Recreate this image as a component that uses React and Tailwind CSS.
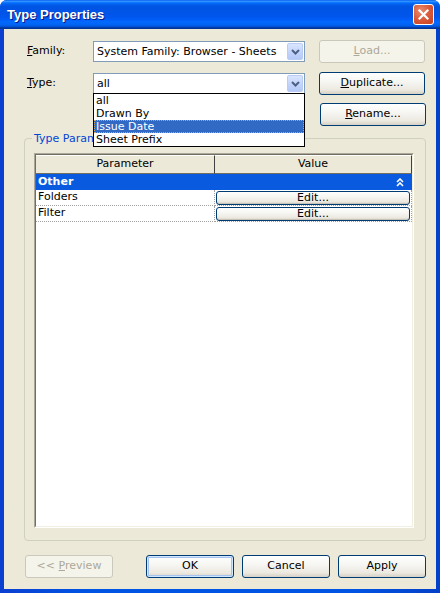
import React from "react";

const xpButton =
  "flex items-center justify-center rounded-[3px] border border-[#003c74] bg-[linear-gradient(to_bottom,#ffffff_0%,#f6f6f3_40%,#ece9e0_80%,#d6d0c5_100%)] text-black";
const xpButtonDisabled =
  "flex items-center justify-center rounded-[3px] border border-[#cac8bb] bg-[#f5f4ea] text-[#aca899]";

function Chevron() {
  return (
    <svg width="9" height="6" viewBox="0 0 9 6">
      <path d="M1 1 L4.5 4.5 L8 1" fill="none" stroke="#4d6185" strokeWidth="2" />
    </svg>
  );
}

function Combo({ value, children }) {
  return (
    <div className="relative h-[21px] w-[212px] border border-[#7f9db9] bg-white flex items-center">
      <span className="flex-1 pl-[3px] leading-none">{value}</span>
      <div className="mr-[1px] flex h-[17px] w-[16px] items-center justify-center rounded-[2px] border border-[#b9ccf6] bg-[linear-gradient(to_bottom,#d9e5fd_0%,#c1d3fb_60%,#b4c9f7_100%)]">
        <Chevron />
      </div>
      {children}
    </div>
  );
}

function CollapseIcon() {
  return (
    <svg width="8" height="9" viewBox="0 0 8 9">
      <path d="M1 4 L4 1 L7 4 M1 8 L4 5 L7 8" fill="none" stroke="white" strokeWidth="1.6" />
    </svg>
  );
}

export default function App() {
  return (
    <div className="h-[593px] w-[440px] bg-white font-['DejaVu_Sans',sans-serif] text-[11px] text-black">
      <div className="flex h-full w-full flex-col rounded-t-[7px] bg-[linear-gradient(to_right,#0a3fd0,#0054e3_20%,#0054e3_80%,#0440c8)]">
        {/* title bar */}
        <div className="flex h-[29px] shrink-0 items-center justify-between rounded-t-[7px] bg-[linear-gradient(to_bottom,#0058ee_0%,#3593ff_4%,#288eff_6%,#127dff_8%,#036ffc_10%,#0262ee_14%,#0057e5_20%,#0054e3_24%,#0055eb_56%,#005bf5_66%,#026afe_76%,#0062ef_86%,#0052d6_92%,#0040ab_94%,#003092_100%)] pl-[7px] pr-[6px]">
          <span className="font-['Liberation_Sans',sans-serif] text-[13px] font-bold text-white [text-shadow:1px_1px_0_#0a1883]">
            Type Properties
          </span>
          <div className="flex h-[21px] w-[21px] items-center justify-center rounded-[3px] border border-white bg-[radial-gradient(circle_at_35%_30%,#e88c70_0%,#d9593a_50%,#c4401e_100%)]">
            <svg width="11" height="11" viewBox="0 0 11 11">
              <path d="M1.5 1.5 L9.5 9.5 M9.5 1.5 L1.5 9.5" stroke="white" strokeWidth="2.2" strokeLinecap="square" />
            </svg>
          </div>
        </div>

        {/* dialog body */}
        <div className="mx-[4px] mb-[4px] flex flex-1 flex-col bg-[#ece9d8] pl-[20px] pr-[10px] pt-[11px] pb-[11px]">
          <div className="flex h-[23px] items-center">
            <span className="w-[69px] pl-[3px]">
              <span className="underline">F</span>amily:
            </span>
            <Combo value="System Family: Browser - Sheets" />
            <div className={xpButtonDisabled + " ml-[14px] h-[23px] w-[106px]"}>
              <span>
                <span className="underline">L</span>oad...
              </span>
            </div>
          </div>

          <div className="relative z-10 mt-[9px] flex h-[23px] items-center">
            <span className="w-[69px] pl-[3px]">
              <span className="underline">T</span>ype:
            </span>
            <Combo value="all">
              <div className="absolute left-[-1px] top-full w-[212px] border border-black bg-white">
                <div className="h-[13px] pl-[2px] leading-[13px]">all</div>
                <div className="h-[13px] pl-[2px] leading-[13px]">Drawn By</div>
                <div className="h-[13px] border border-dotted border-[#d9a24b] bg-[#316ac5] pl-[1px] leading-[11px] text-white">
                  Issue Date
                </div>
                <div className="h-[13px] pl-[2px] leading-[13px]">Sheet Prefix</div>
              </div>
            </Combo>
            <div className={xpButton + " ml-[14px] h-[23px] w-[106px]"}>
              <span>
                <span className="underline">D</span>uplicate...
              </span>
            </div>
          </div>

          <div className="mt-[8px] flex h-[23px] items-center justify-end">
            <div className={xpButton + " h-[23px] w-[106px]"}>
              <span>
                <span className="underline">R</span>ename...
              </span>
            </div>
          </div>

          {/* Type Parameters group */}
          <div className="relative mt-[12px] flex h-[403px] flex-col rounded-[4px] border border-[#d0d0bf] pl-[9px] pr-[11px] pt-[14px] pb-[12px]">
            <span className="absolute left-[7px] top-[-7px] bg-[#ece9d8] px-[2px] leading-[13px] text-[#0046d5]">
              Type Parameters
            </span>
            <div className="flex flex-1 flex-col border border-b-white border-l-[#aca899] border-r-white border-t-[#aca899]">
              <div className="flex flex-1 flex-col border border-b-[#f1efe2] border-l-[#716f64] border-r-[#f1efe2] border-t-[#716f64] bg-white">
                <div className="flex h-[19px] bg-[#ece9d8]">
                  <div className="flex w-[179px] items-center justify-center border-b border-r border-b-[#716f64] border-r-[#404040] border-t border-t-white">
                    Parameter
                  </div>
                  <div className="flex w-[197px] items-center justify-center border-b border-r border-b-[#716f64] border-r-[#404040] border-t border-t-white">
                    Value
                  </div>
                  <div className="flex-1 bg-white" />
                </div>
                <div className="flex h-[16px] items-center justify-between bg-[#0a5ae0] pl-[2px] pr-[8px]">
                  <span className="font-bold text-white">Other</span>
                  <CollapseIcon />
                </div>
                {["Folders", "Filter"].map((name) => (
                  <div key={name} className="flex h-[16px]">
                    <div className="flex w-[179px] items-center border-b border-r border-dotted border-[#a0a0a0] pl-[2px]">
                      {name}
                    </div>
                    <div className="flex w-[197px] items-center border-b border-r border-dotted border-[#a0a0a0] px-[1px]">
                      <div className={xpButton + " h-[14px] w-full leading-none shadow-[inset_0_-1px_0_#c7c3b7]"}>
                        Edit...
                      </div>
                    </div>
                  </div>
                ))}
              </div>
            </div>
          </div>

          {/* dialog buttons */}
          <div className="mt-[14px] flex h-[23px] items-center justify-between">
            <div className={xpButtonDisabled + " ml-[1px] h-[23px] w-[88px]"}>
              <span>
                &lt;&lt; <span className="underline">P</span>review
              </span>
            </div>
            <div className="flex gap-[8px]">
              <div className={xpButton + " h-[23px] w-[88px] shadow-[inset_0_0_0_1px_#cee7ff,inset_0_0_0_2px_#a6c3ef]"}>OK</div>
              <div className={xpButton + " h-[23px] w-[88px]"}>Cancel</div>
              <div className={xpButton + " h-[23px] w-[88px]"}>Apply</div>
            </div>
          </div>
        </div>
      </div>
    </div>
  );
}
